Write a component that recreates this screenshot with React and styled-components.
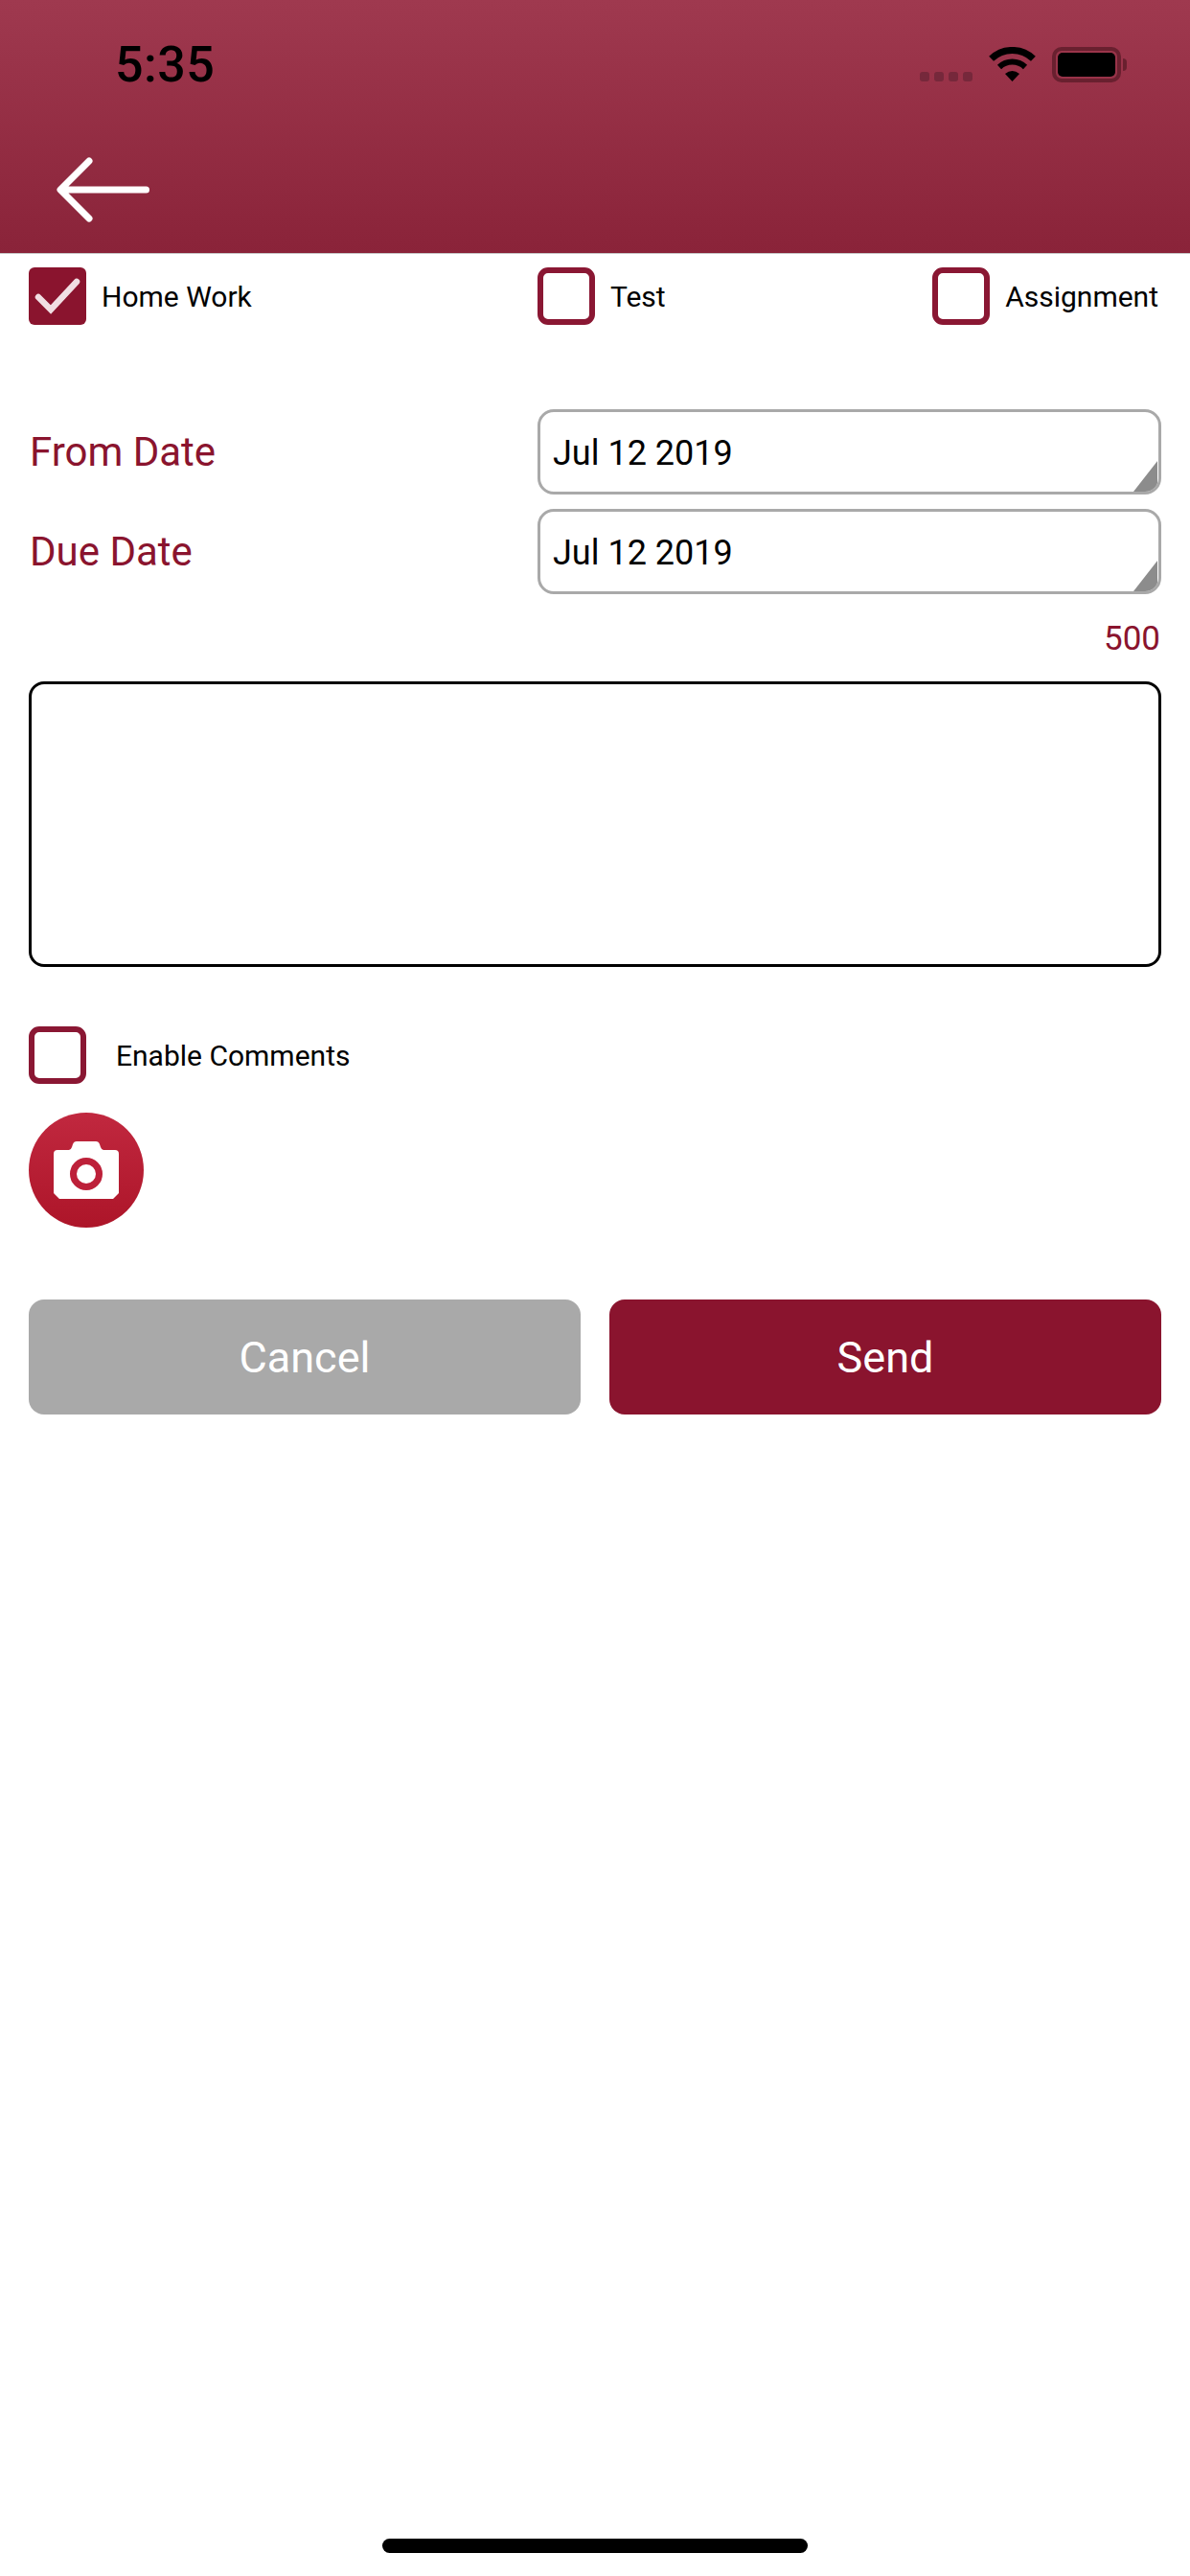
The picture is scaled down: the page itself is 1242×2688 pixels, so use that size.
import React from "react";
import styled, { createGlobalStyle } from "styled-components";

const Global = createGlobalStyle`
  html, body { margin: 0; padding: 0; background: #fff; }
  body { font-family: Roboto, "Liberation Sans", sans-serif; }
  * { box-sizing: border-box; }
`;

const Page = styled.div`
  width: 1242px;
  height: 2688px;
  display: flex;
  flex-direction: column;
  background: #fff;
`;

const Header = styled.header`
  height: 265px;
  flex: none;
  background: linear-gradient(180deg, #9f394f 0%, #8a2339 100%);
  border-bottom: 1px solid #c9c9c9;
  display: flex;
  flex-direction: column;
`;

const StatusBar = styled.div`
  height: 162px;
  flex: none;
  padding: 0 72px 0 120px;
  display: flex;
  justify-content: space-between;
  align-items: flex-start;
`;

const Clock = styled.span`
  font-size: 52px;
  font-weight: 500;
  line-height: 50px;
  margin-top: 43px;
  letter-spacing: 0.5px;
  color: #000;
`;

const StatusIcons = styled.div`
  display: flex;
  align-items: flex-start;
  margin-top: 49px;
`;

const SignalDots = styled.div`
  display: flex;
  gap: 5px;
  margin: 26px 17px 0 0;
`;

const SignalDot = styled.i`
  width: 10px;
  height: 10px;
  border-radius: 3px;
  background: #76283b;
`;

const Battery = styled.div`
  position: relative;
  width: 72px;
  height: 37px;
  margin-left: 17px;
  border: 4px solid #69202f;
  border-radius: 10px;
  padding: 2px;
  &::after {
    content: "";
    position: absolute;
    left: 70px;
    top: 8px;
    width: 4px;
    height: 13px;
    background: #69202f;
    border-radius: 0 4px 4px 0;
  }
`;

const BatteryFill = styled.div`
  width: 100%;
  height: 100%;
  background: #000;
  border-radius: 5px;
`;

const BackButton = styled.div`
  padding-left: 59px;
  line-height: 0;
`;

const Form = styled.main`
  padding: 14px 30px 0;
  display: flex;
  flex-direction: column;
`;

const Row = styled.div`
  display: grid;
  grid-template-columns: 531px 1fr;
  align-items: center;
`;

const TypeRow = styled(Row)`
  margin-bottom: 88px;
`;

const DateRow = styled(Row)`
  height: 89px;
  margin-bottom: 15px;
`;

const TypeGroup = styled.div`
  display: flex;
  justify-content: space-between;
  padding-right: 3px;
`;

const CheckItem = styled.label`
  display: flex;
  align-items: center;
  gap: ${(p) => p.$gap || 16}px;
  font-size: 30px;
  color: #000;
`;

const Box = styled.span`
  width: 60px;
  height: 60px;
  flex: none;
  border-radius: ${(p) => (p.$checked ? 6 : 11)}px;
  border: ${(p) => (p.$checked ? 0 : 6)}px solid #8a1733;
  background: ${(p) => (p.$checked ? "#8a142e" : "#fff")};
  display: flex;
  line-height: 0;
`;

const DateLabel = styled.span`
  font-size: 42px;
  color: #8a142e;
  padding-left: 1px;
`;

const DateField = styled.div`
  position: relative;
  height: 89px;
  overflow: hidden;
  border: 3px solid #a9a9a9;
  border-radius: 17px;
  padding: 2px 0 0 13px;
  display: flex;
  align-items: center;
  font-size: 36px;
  color: #000;
`;

const Fold = styled.svg`
  position: absolute;
  right: 0;
  bottom: 0;
`;

const Counter = styled.div`
  text-align: right;
  font-size: 35px;
  line-height: 42px;
  color: #8a142e;
  margin: 11px 0 0;
  padding-right: 1px;
`;

const MessageBox = styled.div`
  height: 298px;
  margin-top: 23px;
  border: 3px solid #000;
  border-radius: 16px;
  background: #fff;
`;

const CommentRow = styled.div`
  margin-top: 62px;
`;

const PhotoButton = styled.div`
  width: 120px;
  height: 120px;
  margin-top: 30px;
  border-radius: 50%;
  background: linear-gradient(180deg, #c1283f 0%, #ad1529 100%);
  display: flex;
  align-items: center;
  justify-content: center;
`;

const Actions = styled.div`
  display: grid;
  grid-template-columns: 1fr 1fr;
  gap: 30px;
  margin-top: 75px;
`;

const ActionButton = styled.div`
  height: 120px;
  border-radius: 16px;
  background: ${(p) => p.$bg};
  color: #fff;
  font-size: 45px;
  display: flex;
  align-items: center;
  justify-content: center;
`;

const HomeIndicator = styled.div`
  width: 444px;
  height: 15px;
  margin: auto auto 24px;
  background: #000;
  border-radius: 8px;
`;

const Wifi = () => (
  <svg width="49" height="36" viewBox="0 0 49 36">
    <g fill="none" stroke="#000">
      <path d="M2.6 12.3A31.5 31.5 0 0 1 46.4 12.3" strokeWidth="7" />
      <path d="M11 21A19.5 19.5 0 0 1 38 21" strokeWidth="6" />
    </g>
    <path d="M24.5 36L17 28Q24.5 22 32 28Z" fill="#000" />
  </svg>
);

const BackArrow = () => (
  <svg width="100" height="72" viewBox="0 0 100 72">
    <path
      d="M93.5 36H5M34 6L4 36L34 66"
      fill="none"
      stroke="#fff"
      strokeWidth="7"
      strokeLinecap="round"
      strokeLinejoin="round"
    />
  </svg>
);

const Check = () => (
  <svg width="60" height="60" viewBox="0 0 60 60">
    <path
      d="M10 31L23 44L50 15"
      fill="none"
      stroke="#f1dfe3"
      strokeWidth="6.5"
      strokeLinecap="round"
      strokeLinejoin="miter"
    />
  </svg>
);

const Camera = () => (
  <svg width="68" height="60" viewBox="0 0 68 60">
    <path
      d="M4 9H16Q18 9 19 6L20 3Q21 0 24 0H44Q47 0 48 3L49 6Q50 9 52 9H64Q68 9 68 13V54L62 60H6L0 54V13Q0 9 4 9Z"
      fill="#fff"
    />
    <circle cx="34" cy="34" r="13.5" fill="#fff" stroke="#bd2039" strokeWidth="7" />
  </svg>
);

const FoldCorner = () => (
  <Fold width="26" height="32" viewBox="0 0 26 32">
    <path d="M25 0V32H0Z" fill="#8c8c8c" />
  </Fold>
);

export default function App() {
  return (
    <Page>
      <Global />
      <Header>
        <StatusBar>
          <Clock>5:35</Clock>
          <StatusIcons>
            <SignalDots>
              <SignalDot />
              <SignalDot />
              <SignalDot />
              <SignalDot />
            </SignalDots>
            <Wifi />
            <Battery>
              <BatteryFill />
            </Battery>
          </StatusIcons>
        </StatusBar>
        <BackButton>
          <BackArrow />
        </BackButton>
      </Header>
      <Form>
        <TypeRow>
          <CheckItem>
            <Box $checked>
              <Check />
            </Box>
            Home Work
          </CheckItem>
          <TypeGroup>
            <CheckItem>
              <Box />
              Test
            </CheckItem>
            <CheckItem>
              <Box />
              Assignment
            </CheckItem>
          </TypeGroup>
        </TypeRow>
        <DateRow>
          <DateLabel>From Date</DateLabel>
          <DateField>
            Jul 12 2019
            <FoldCorner />
          </DateField>
        </DateRow>
        <DateRow>
          <DateLabel>Due Date</DateLabel>
          <DateField>
            Jul 12 2019
            <FoldCorner />
          </DateField>
        </DateRow>
        <Counter>500</Counter>
        <MessageBox />
        <CommentRow>
          <CheckItem $gap={31}>
            <Box />
            Enable Comments
          </CheckItem>
        </CommentRow>
        <PhotoButton>
          <Camera />
        </PhotoButton>
        <Actions>
          <ActionButton $bg="#a9a9a9">Cancel</ActionButton>
          <ActionButton $bg="#8a142e">Send</ActionButton>
        </Actions>
      </Form>
      <HomeIndicator />
    </Page>
  );
}
